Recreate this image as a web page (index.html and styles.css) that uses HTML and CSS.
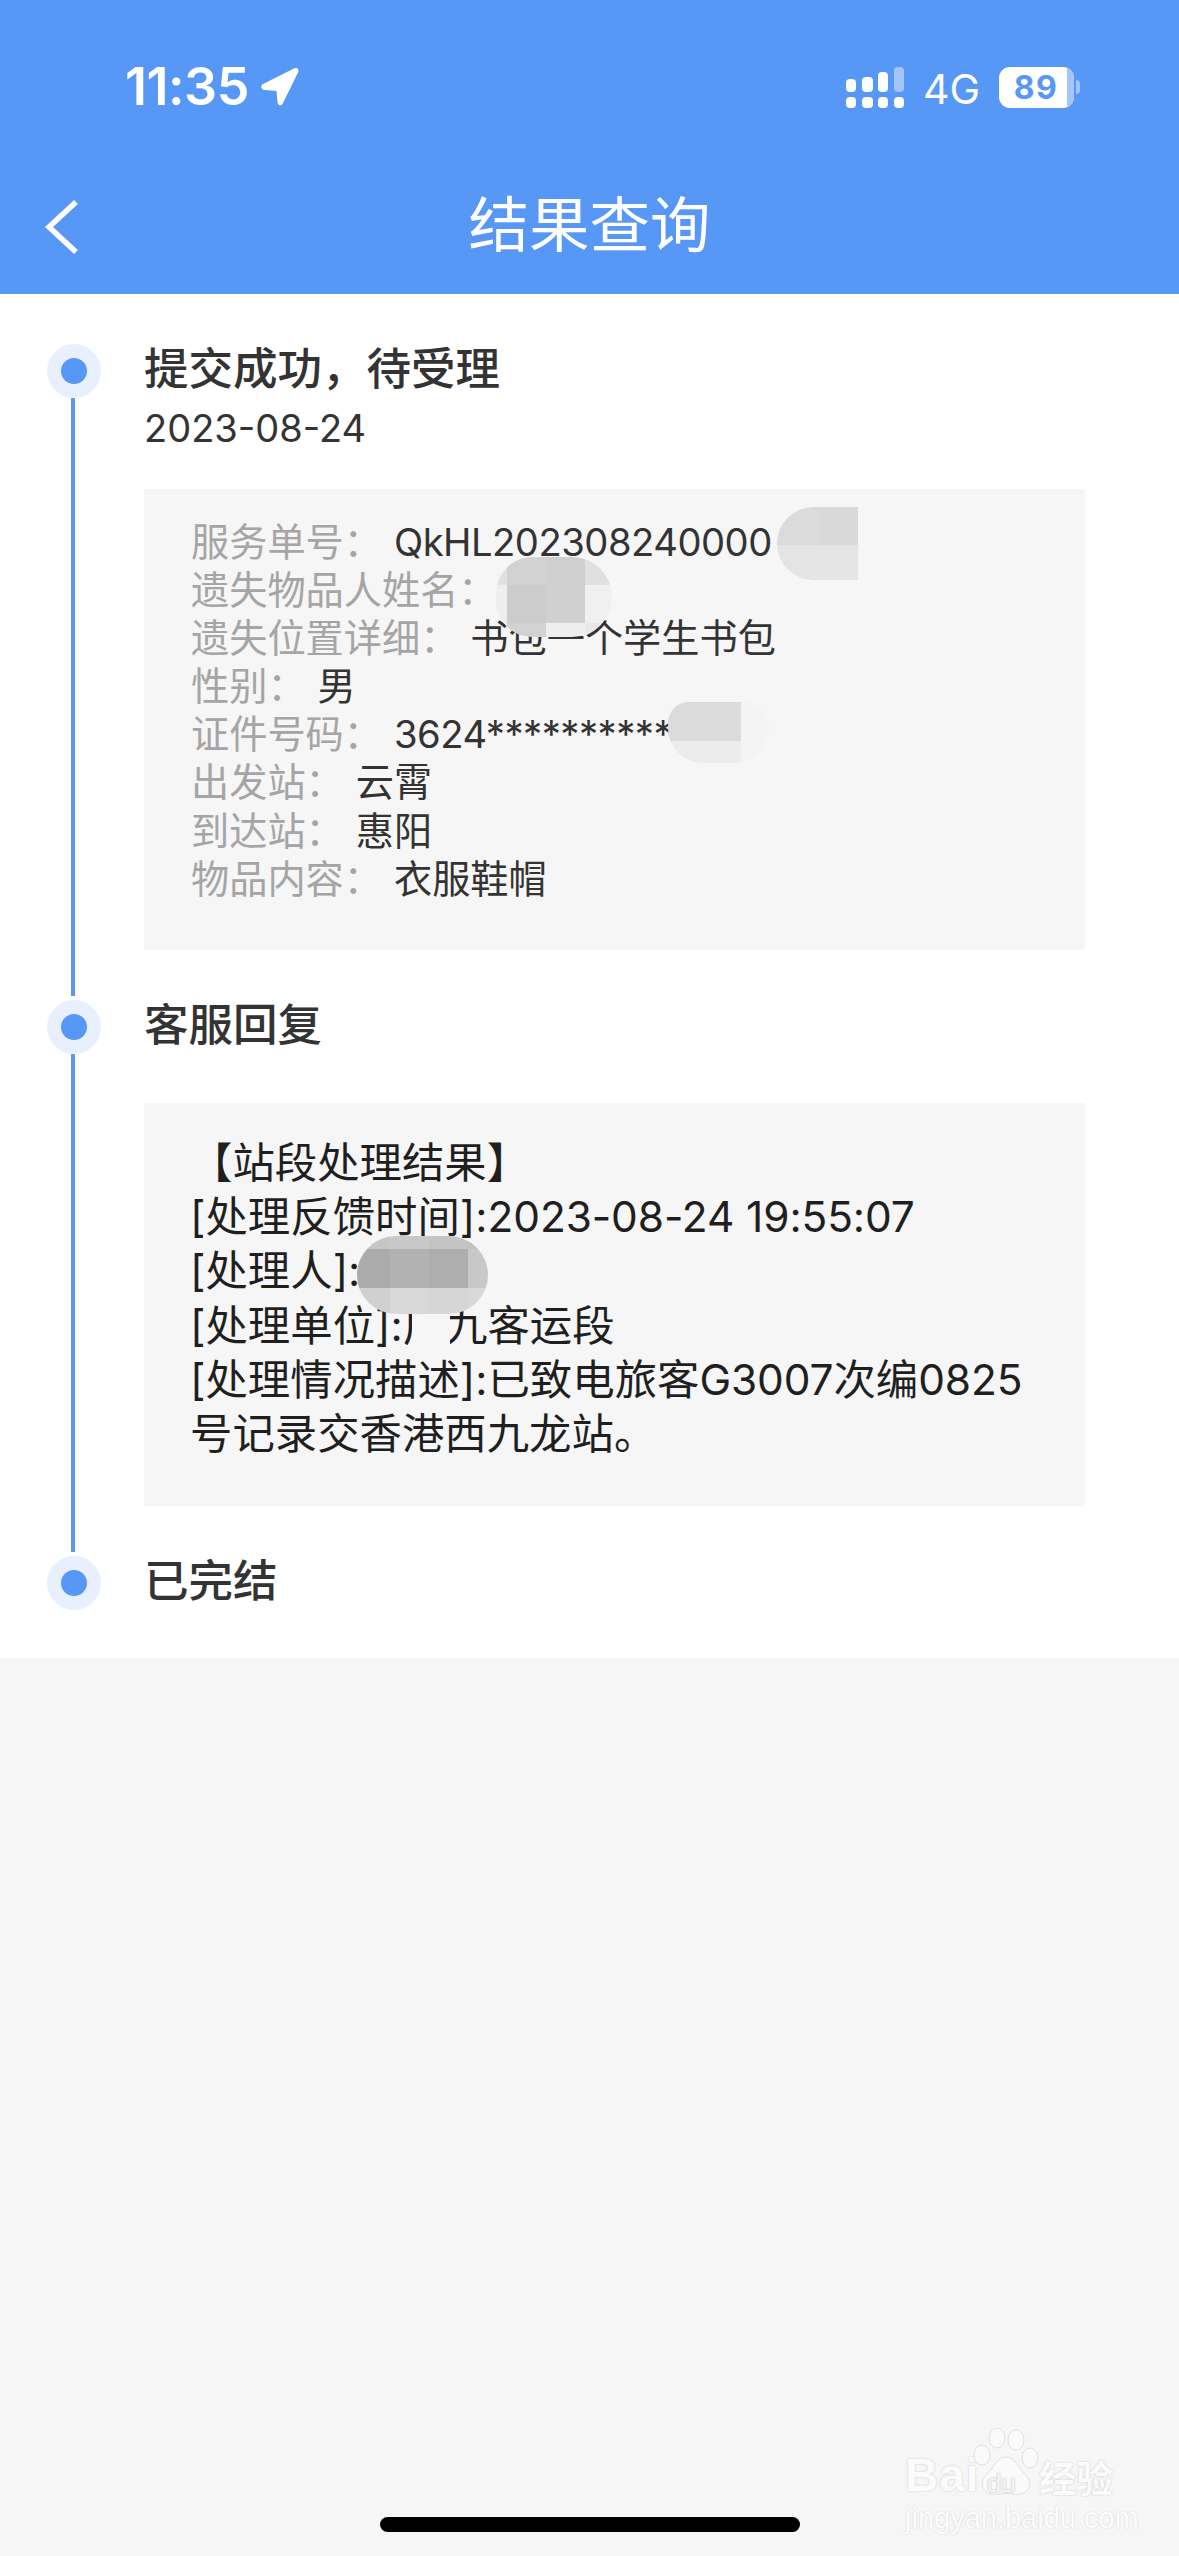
FILE: index.html
```html
<!DOCTYPE html>
<html lang="zh-CN">
<head>
<meta charset="utf-8">
<title>结果查询</title>
<link rel="stylesheet" href="styles.css">
</head>
<body>
<div class="page">
  <header class="header">
    <div class="status">
      <div class="status-left">
        <span class="time">11:35</span>
        <svg class="loc" width="40" height="40" viewBox="0 0 40 40"><path d="M3 17 34 1.500C37 0 39.500 2.500 38 5.500L23 36C21.500 39.500 18 39 17.500 35L16.500 24 5 23C1 22.500 0 19 3 17Z" fill="#fff"/></svg>
      </div>
      <div class="status-right">
        <svg class="signal" width="58" height="41" viewBox="0 0 58 41">
          <g fill="#fff">
            <rect x="0" y="12" width="10" height="13" rx="4"/>
            <rect x="16" y="10" width="11" height="15" rx="4"/>
            <rect x="32" y="5" width="10" height="20" rx="4"/>
            <rect x="0" y="30" width="10" height="11" rx="4"/>
            <rect x="16" y="30" width="11" height="11" rx="4"/>
            <rect x="32" y="30" width="10" height="11" rx="4"/>
            <rect x="48" y="30" width="10" height="11" rx="4"/>
          </g>
          <rect x="48" y="0" width="10" height="25" rx="4" fill="#a3c5f9"/>
        </svg>
        <span class="net">4G</span>
        <div class="battery"><span class="battery-num">89</span><span class="battery-rest"></span></div>
        <span class="battery-tip"></span>
      </div>
    </div>
    <nav class="nav">
      <svg class="back" width="38" height="54" viewBox="0 0 38 54"><path d="M33 2 6 27l27 25" fill="none" stroke="#fff" stroke-width="5.500"/></svg>
      <h1 class="nav-title">结果查询</h1>
    </nav>
  </header>

  <main class="timeline">
    <section class="item item-first">
      <div class="rail"><span class="halo"><span class="dot"></span></span><span class="line"></span></div>
      <div class="body">
        <h2 class="step">提交成功，待受理</h2>
        <p class="date">2023-08-24</p>
        <div class="card card-info">
          <p class="row"><span class="key">服务单号：</span><span class="val num">QkHL202308240000</span></p>
          <p class="row"><span class="key">遗失物品人姓名：</span></p>
          <p class="row"><span class="key">遗失位置详细：</span><span class="val">书包一个学生书包</span></p>
          <p class="row"><span class="key">性别：</span><span class="val">男</span></p>
          <p class="row"><span class="key">证件号码：</span><span class="val num">3624************</span></p>
          <p class="row"><span class="key">出发站：</span><span class="val">云霄</span></p>
          <p class="row"><span class="key">到达站：</span><span class="val">惠阳</span></p>
          <p class="row"><span class="key">物品内容：</span><span class="val">衣服鞋帽</span></p>
          <div class="blur blur-a"><i class="t-da"></i><i class="t-d9"></i><i class="t-e4"></i><i class="t-e4"></i></div>
          <div class="blur blur-b">
            <i class="t-e0"></i><i class="t-d2"></i><i class="t-cf"></i><i class="t-e0"></i>
            <i class="t-ee"></i><i class="t-cc"></i><i class="t-d0"></i><i class="t-f0"></i>
            <i class="t-f0"></i><i class="t-d2"></i><i class="t-ee"></i><i class="t-e8"></i>
          </div>
          <div class="blur blur-c"><i class="t-da"></i><i class="t-da"></i><i class="t-f3"></i><i class="t-ec"></i><i class="t-ec"></i><i class="t-f3"></i></div>
        </div>
      </div>
    </section>

    <section class="item item-second">
      <div class="rail"><span class="halo"><span class="dot"></span></span><span class="line"></span></div>
      <div class="body">
        <h2 class="step">客服回复</h2>
        <div class="card card-reply">
          <p>【站段处理结果】</p>
          <p>[处理反馈时间]:<span class="num">2023-08-24 19:55:07</span></p>
          <p>[处理人]:</p>
          <p>[处理单位]:广九客运段</p>
          <p>[处理情况描述]:已致电旅客<span class="num">G3007</span>次编<span class="num">0825</span>号记录交香港西九龙站。</p>
          <div class="patch"></div>
          <div class="blur blur-d">
            <i class="t-c6"></i><i class="t-c8"></i><i class="t-c4"></i><i class="t-c2"></i>
            <i class="t-ab"></i><i class="t-b2"></i><i class="t-ae"></i><i class="t-c8"></i>
            <i class="t-d0"></i><i class="t-d8"></i><i class="t-d6"></i><i class="t-d8"></i>
          </div>
        </div>
      </div>
    </section>

    <section class="item item-last">
      <div class="rail"><span class="halo"><span class="dot"></span></span></div>
      <div class="body">
        <h2 class="step">已完结</h2>
      </div>
    </section>
  </main>

  <div class="home-bar"></div>

  <div class="watermark">
    <div class="wm-top">
      <span class="wm-bai">Bai</span>
      <span class="wm-paw">
        <svg width="66" height="70" viewBox="0 0 66 70">
          <g fill="#fafafa" stroke="#e0e0e0" stroke-width="1">
            <ellipse cx="9" cy="27" rx="8" ry="10"/>
            <ellipse cx="24" cy="10" rx="8" ry="10"/>
            <ellipse cx="43" cy="12" rx="8" ry="10"/>
            <ellipse cx="57" cy="30" rx="8" ry="10"/>
            <path d="M33 29c-9 0-12 10-17 15-5 5-8 9-6 15 2 7 10 8 17 7 4-1 8-1 12 0 7 1 15 0 17-7 2-6-1-10-6-15-5-5-8-15-17-15Z"/>
          </g>
        </svg>
        <span class="wm-du">du</span>
      </span>
      <span class="wm-cn">经验</span>
    </div>
    <div class="wm-url">jingyan.baidu.com</div>
  </div>
</div>
</body>
</html>
```
FILE: styles.css
```css
* { box-sizing: border-box; }
html, body { margin: 0; padding: 0; }
body {
  width: 1179px;
  height: 2556px;
  background: #f6f6f6;
  font-family: Inter, "Noto Sans CJK SC", sans-serif;
  overflow: hidden;
}
.page { position: relative; width: 1179px; height: 2556px; }
h1, h2, p { margin: 0; font-weight: 400; }

.header { height: 294px; background: #5797f5; color: #fff; display: flex; flex-direction: column; }
.status { height: 174px; padding: 62px 99px 0 125px; display: flex; justify-content: space-between; align-items: flex-start; }
.status-left { display: flex; align-items: center; gap: 11px; height: 50px; }
.time { font-size: 52px; font-weight: 600; line-height: 50px; letter-spacing: -.5px; }
.loc { display: block; margin-top: -1px; }
.status-right { display: flex; align-items: flex-start; margin-top: 5px; }
.signal { display: block; }
.net { font-size: 41px; line-height: 44px; margin: 0 0 0 19px; width: 76px; font-weight: 400; }
.battery { width: 75px; height: 41px; border-radius: 11px; background: #fff; display: flex; overflow: hidden; }
.battery-num { flex: 1; padding-left: 6px; color: #5797f5; font-size: 32px; line-height: 41px; font-weight: 700; text-align: center; letter-spacing: 1.500px; }
.battery-rest { width: 7px; background: #a3c5f9; }
.battery-tip { width: 4px; height: 14px; margin: 13px 0 0 2px; background: #a3c5f9; border-radius: 0 7px 7px 0; }

.nav { position: relative; flex: 1; display: flex; justify-content: center; }
.nav-title { font-size: 60.500px; line-height: 80px; margin-top: 7px; font-family: "Noto Sans CJK SC", sans-serif; font-weight: 400; }
.back { position: absolute; left: 43px; top: 26px; }

.timeline { background: #fff; height: 1364px; padding-top: 50px; display: flex; flex-direction: column; }
.item { display: flex; }
.item-first { height: 656px; }
.item-second { height: 556px; }
.rail { width: 144px; padding-left: 47px; display: flex; flex-direction: column; flex: none; }
.halo { width: 54px; height: 54px; border-radius: 50%; background: #e8f0fe; display: flex; align-items: center; justify-content: center; flex: none; }
.dot { width: 26px; height: 26px; border-radius: 50%; background: #5797f5; }
.line { width: 3.500px; flex: 1; background: #5b98ee; margin: 0 0 4px 24px; }
.body { width: 941px; }
.step { font-size: 44.500px; line-height: 46px; margin-top: -1px; font-weight: 500; color: #333; font-family: "Noto Sans CJK SC", sans-serif; }
.date { font-size: 38px; line-height: 46px; margin-top: 16px; color: #333; }
.num { letter-spacing: -.5px; }

.card { position: relative; background: #f6f6f6; }
.card-info { height: 461px; margin-top: 38px; padding: 29px 47px 0; }
.row { font-size: 38.200px; line-height: 48.100px; color: #333; white-space: nowrap; }
.key { color: #a5a5a5; margin-right: 12px; }
.val { color: #333; }
.card-reply { height: 403px; margin-top: 58px; padding: 33px 40px 0 46px; font-size: 42.400px; line-height: 54.200px; color: #1f1f1f; }
.card-reply .num { letter-spacing: -.1px; }

.blur { position: absolute; display: grid; overflow: hidden; }
.blur-a { left: 633px; top: 18px; width: 81px; height: 73px; border-radius: 38px 0 0 38px; grid-template-columns: 41px 40px; grid-template-rows: 38px 35px; }
.blur-b { left: 352px; top: 68px; width: 116px; height: 80px; border-radius: 40px 44px 44px 40px; grid-template-columns: 11px 39px 39px 27px; grid-template-rows: 28px 38px 14px; }
.blur-c { left: 524px; top: 213px; width: 101px; height: 61px; border-radius: 24px 30px 40px 40px; grid-template-columns: 33px 40px 28px; grid-template-rows: 39px 22px; }
.blur-d { left: 213px; top: 133px; width: 131px; height: 78px; border-radius: 39px; grid-template-columns: 33px 39px 39px 20px; grid-template-rows: 13px 39px 26px; }
.patch { position: absolute; left: 268px; top: 198px; width: 38px; height: 46px; background: #f6f6f6; }
.t-ab { background: #ababab; }
.t-ae { background: #aeaeae; }
.t-b2 { background: #b2b2b2; }
.t-c2 { background: #c2c2c2; }
.t-c4 { background: #c4c4c4; }
.t-c6 { background: #c6c6c6; }
.t-c8 { background: #c8c8c8; }
.t-cc { background: #cccccc; }
.t-cf { background: #cfcfcf; }
.t-d0 { background: #d0d0d0; }
.t-d2 { background: #d2d2d2; }
.t-d6 { background: #d6d6d6; }
.t-d8 { background: #d8d8d8; }
.t-d9 { background: #d9d9d9; }
.t-da { background: #dbdbdb; }
.t-e0 { background: #e0e0e0; }
.t-e4 { background: #e4e4e4; }
.t-e8 { background: #e8e8e8; }
.t-ec { background: #ececec; }
.t-ee { background: #eeeeee; }
.t-f0 { background: #f0f0f0; }
.t-f3 { background: #f3f3f3; }

.home-bar { position: absolute; left: 380px; top: 2517px; width: 420px; height: 15px; border-radius: 8px; background: #000; }

.watermark { position: absolute; left: 905px; top: 2428px; width: 216px; color: #fbfbfb; }
.wm-top { display: flex; align-items: flex-end; height: 70px; }
.wm-bai, .wm-du, .wm-cn { font-family: "Liberation Sans", sans-serif; font-weight: 700; text-shadow: 0 0 2px #c4c4c4; }
.wm-bai { font-size: 46px; line-height: 46px; width: 68px; letter-spacing: 1px; }
.wm-paw { position: relative; width: 66px; height: 70px; }
.wm-du { position: absolute; left: 14px; top: 42px; font-size: 26px; line-height: 26px; font-weight: 400; color: #f4f4f4; text-shadow: 0 0 2px #aaa; }
.wm-cn { font-family: "Noto Sans CJK SC", sans-serif; font-size: 37px; line-height: 42px; margin-left: 0; }
.wm-url { font-family: "Liberation Sans", sans-serif; font-size: 29px; line-height: 32px; margin-top: 4px; color: #fcfcfc; text-shadow: 0 0 2px #cfcfcf; white-space: nowrap; }
```
